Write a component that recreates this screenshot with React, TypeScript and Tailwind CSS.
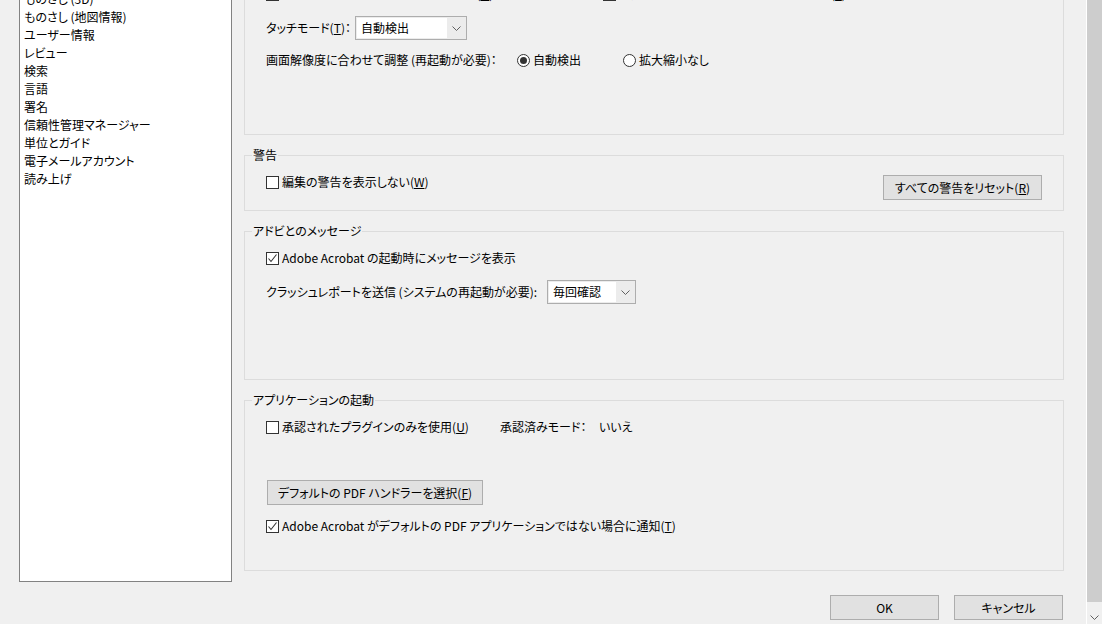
import React from "react";

// Acrobat 環境設定ダイアログ（一般）の下半分

const menuItems = [
  "ものさし (3D)",
  "ものさし (地図情報)",
  "ユーザー情報",
  "レビュー",
  "検索",
  "言語",
  "署名",
  "信頼性管理マネージャー",
  "単位とガイド",
  "電子メールアカウント",
  "読み上げ",
];

function Chevron({ className = "" }: { className?: string }) {
  return (
    <svg width="9" height="5" viewBox="0 0 9 5" className={className}>
      <polyline points="0.5,0.5 4.5,4.5 8.5,0.5" fill="none" stroke="#606060" strokeWidth="1" />
    </svg>
  );
}

function Checkbox({ checked = false }: { checked?: boolean }) {
  return (
    <span className="w-[13px] h-[13px] shrink-0 border border-[#333333] bg-white flex items-center justify-center">
      {checked && (
        <svg width="11" height="11" viewBox="0 0 11 11">
          <polyline points="1.5,5.5 4,8.5 9.5,1.5" fill="none" stroke="#333333" strokeWidth="1.1" />
        </svg>
      )}
    </span>
  );
}

function Radio({ checked = false }: { checked?: boolean }) {
  return (
    <span className="w-[13px] h-[13px] shrink-0 rounded-full border border-[#333333] bg-white flex items-center justify-center">
      {checked && <span className="w-[7px] h-[7px] rounded-full bg-[#333333]" />}
    </span>
  );
}

function CheckRow({ checked, children, className = "" }: { checked?: boolean; children: React.ReactNode; className?: string }) {
  return (
    <div className={`flex items-center h-[16px] gap-[3px] ${className}`}>
      <Checkbox checked={checked} />
      <span className="whitespace-nowrap">{children}</span>
    </div>
  );
}

function Select({ value, width, textWidth }: { value: string; width: string; textWidth: string }) {
  return (
    <div className={`${width} h-[24px] border border-[#adadad] bg-[#ececec] flex items-center`}>
      <div className={`${textWidth} h-[20px] ml-[1px] bg-white flex items-center pl-[4px] whitespace-nowrap`}>{value}</div>
      <div className="flex-1 flex justify-center">
        <Chevron />
      </div>
    </div>
  );
}

function Button({ children, className = "" }: { children: React.ReactNode; className?: string }) {
  return (
    <div className={`h-[25px] border border-[#adadad] bg-[#e1e1e1] flex items-center justify-center whitespace-nowrap ${className}`}>
      {children}
    </div>
  );
}

function Group({ title, className = "", children }: { title?: string; className?: string; children: React.ReactNode }) {
  return (
    <div className={`relative border border-[#dcdcdc] ${className}`}>
      {title && (
        <span className="absolute -top-[9px] left-[7px] px-[1px] bg-[#f0f0f0] leading-[16px] whitespace-nowrap">{title}</span>
      )}
      {children}
    </div>
  );
}

export default function App() {
  return (
    <div
      className="w-[1102px] h-[624px] overflow-hidden bg-[#f0f0f0] flex text-[12px] leading-[16px] text-black [font-feature-settings:'palt']"
      style={{ fontFamily: '"Noto Sans CJK JP", "Noto Sans", sans-serif' }}
    >
      <div className="w-[1086px] flex flex-col">
        <div className="flex items-start">
          {/* 左のカテゴリ一覧 */}
          <div className="ml-[19px] mt-[-11px] w-[213px] h-[593px] border border-[#828282] bg-white pl-[4px] overflow-hidden">
            {menuItems.map((item) => (
              <div key={item} className="h-[18px] leading-[18px] whitespace-nowrap">
                {item}
              </div>
            ))}
          </div>

          {/* 右の設定パネル */}
          <div className="ml-[12px] w-[820px] mt-[-40px] flex flex-col">
            <Group className="h-[175px] pt-[25px] pl-[21px]">
              <div className="flex">
                <CheckRow className="w-[337px]">ドキュメントを開くときにツールを表示(<u>O</u>)</CheckRow>
                <CheckRow>固定解像度のスナップショット画像を使用(<u>F</u>)</CheckRow>
              </div>
              <div className="flex items-center mt-[14px]">
                <span className="w-[89px] whitespace-nowrap">
                  タッチモード(<u>T</u>)：
                </span>
                <Select value="自動検出" width="w-[112px]" textWidth="w-[90px]" />
              </div>
              <div className="flex items-center mt-[12px] h-[16px]">
                <span className="w-[251px] whitespace-nowrap">画面解像度に合わせて調整 (再起動が必要)：</span>
                <div className="w-[106px] flex items-center gap-[3px]">
                  <Radio checked />
                  <span>自動検出</span>
                </div>
                <div className="flex items-center gap-[3px]">
                  <Radio />
                  <span>拡大縮小なし</span>
                </div>
              </div>
            </Group>

            <Group title="警告" className="mt-[20px] h-[56px] pt-[18px] px-[21px]">
              <div className="flex justify-between items-start">
                <CheckRow>
                  編集の警告を表示しない(<u>W</u>)
                </CheckRow>
                <Button className="w-[159px] mt-[1px]">
                  すべての警告をリセット(<u>R</u>)
                </Button>
              </div>
            </Group>

            <Group title="アドビとのメッセージ" className="mt-[20px] h-[149px] pt-[18px] pl-[21px]">
              <CheckRow checked>Adobe Acrobat の起動時にメッセージを表示</CheckRow>
              <div className="flex items-center mt-[14px]">
                <span className="w-[281px] whitespace-nowrap">クラッシュレポートを送信 (システムの再起動が必要):</span>
                <Select value="毎回確認" width="w-[89px]" textWidth="w-[67px]" />
              </div>
            </Group>

            <Group title="アプリケーションの起動" className="mt-[20px] h-[171px] pt-[18px] pl-[21px]">
              <div className="flex items-center h-[16px]">
                <CheckRow className="w-[234px]">
                  承認されたプラグインのみを使用(<u>U</u>)
                </CheckRow>
                <span className="w-[99px] whitespace-nowrap">承認済みモード：</span>
                <span>いいえ</span>
              </div>
              <Button className="w-[216px] ml-[1px] mt-[45px]">
                デフォルトの PDF ハンドラーを選択(<u>F</u>)
              </Button>
              <CheckRow checked className="mt-[13px]">
                Adobe Acrobat がデフォルトの PDF アプリケーションではない場合に通知(<u>T</u>)
              </CheckRow>
            </Group>
          </div>
        </div>

        {/* OK / キャンセル */}
        <div className="flex justify-end gap-[15px] pr-[23px] mt-[13px]">
          <Button className="w-[109px]">OK</Button>
          <Button className="w-[109px]">キャンセル</Button>
        </div>
      </div>

      {/* スクロールバー */}
      <div className="w-[16px] h-full border-l border-white flex flex-col">
        <div className="h-[602px] bg-[#cdcdcd]" />
        <div className="flex-1 flex items-end justify-center pb-[4px]">
          <Chevron />
        </div>
      </div>
    </div>
  );
}
